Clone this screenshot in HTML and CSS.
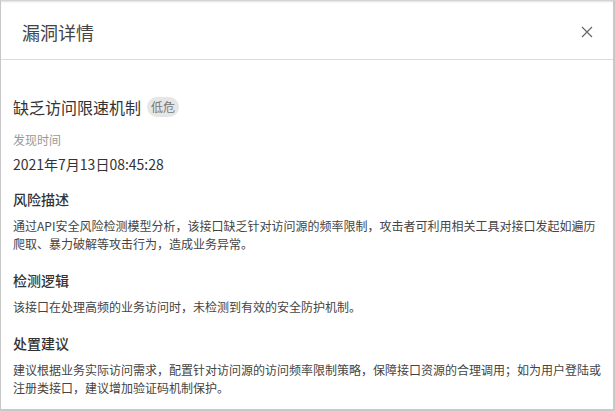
FILE: index.html
```html
<!DOCTYPE html>
<html lang="zh-CN">
<head>
    <meta charset="UTF-8">
    <meta name="viewport" content="width=device-width, initial-scale=1.0">
    <title>漏洞详情</title>
    <link rel="stylesheet" href="styles.css">
</head>
<body>
    <div class="modal">
        <div class="modal-header">
            <span class="modal-title">漏洞详情</span>
            <span class="modal-close">
                <svg width="12" height="12" viewBox="0 0 12 12">
                    <path d="M1 1L11 11M11 1L1 11" stroke="#666" stroke-width="1.2" fill="none"/>
                </svg>
            </span>
        </div>
        <div class="modal-body">
            <div class="vuln-name">
                缺乏访问限速机制
                <span class="level-tag">低危</span>
            </div>
            <div class="field-label">发现时间</div>
            <div class="field-value">2021年7月13日08:45:28</div>

            <div class="section">
                <div class="section-title">风险描述</div>
                <p class="section-text">通过API安全风险检测模型分析，该接口缺乏针对访问源的频率限制，攻击者可利用相关工具对接口发起如遍历爬取、暴力破解等攻击行为，造成业务异常。</p>
            </div>
            <div class="section">
                <div class="section-title">检测逻辑</div>
                <p class="section-text">该接口在处理高频的业务访问时，未检测到有效的安全防护机制。</p>
            </div>
            <div class="section">
                <div class="section-title">处置建议</div>
                <p class="section-text">建议根据业务实际访问需求，配置针对访问源的访问频率限制策略，保障接口资源的合理调用；如为用户登陆或注册类接口，建议增加验证码机制保护。</p>
            </div>
        </div>
    </div>
</body>
</html>
```

FILE: styles.css
```css
body {
    margin: 0;
    background-color: #fff;
    font-family: "Noto Sans CJK SC", "Noto Sans", sans-serif;
}
.modal {
    width: 615px;
    height: 411px;
    box-sizing: border-box;
    border-left: 1px solid #c8c8c8;
    border-right: 2px solid #c8c8c8;
    border-bottom: 2px solid #c8c8c8;
    border-top: 1px solid #d4d4d4;
    box-shadow: inset 0 2px 2px -1px #e0e0e0;
    background: #fff;
    overflow: hidden;
}
.modal-header {
    height: 59px;
    box-sizing: border-box;
    display: flex;
    align-items: center;
    justify-content: space-between;
    padding: 3px 20px 0 21px;
    border-bottom: 1px solid #dcdcdc;
}
.modal-title {
    font-size: 18px;
    line-height: 26px;
    color: #444;
}
.modal-close {
    display: flex;
    width: 12px;
    height: 12px;
}
.modal-body {
    padding: 35px 11px 0 12px;
}
.vuln-name {
    font-size: 16px;
    line-height: 24px;
    color: #333;
    display: flex;
    align-items: center;
}
.level-tag {
    display: inline-block;
    margin-left: 6px;
    height: 20px;
    line-height: 20px;
    padding: 0 4px;
    border-radius: 10px;
    background: #e6e6e6;
    color: #777;
    font-size: 12px;
}
.field-label {
    margin-top: 12px;
    font-size: 12px;
    line-height: 18px;
    color: #999;
}
.field-value {
    margin-top: 4px;
    font-size: 14px;
    line-height: 22px;
    color: #333;
}
.section {
    margin-top: 13px;
}
.section + .section {
    margin-top: 16px;
}
.section-title {
    font-size: 14px;
    line-height: 22px;
    font-weight: 500;
    color: #333;
}
.section-text {
    margin: 7px 0 0;
    font-size: 12px;
    line-height: 18px;
    color: #444;
}
```
